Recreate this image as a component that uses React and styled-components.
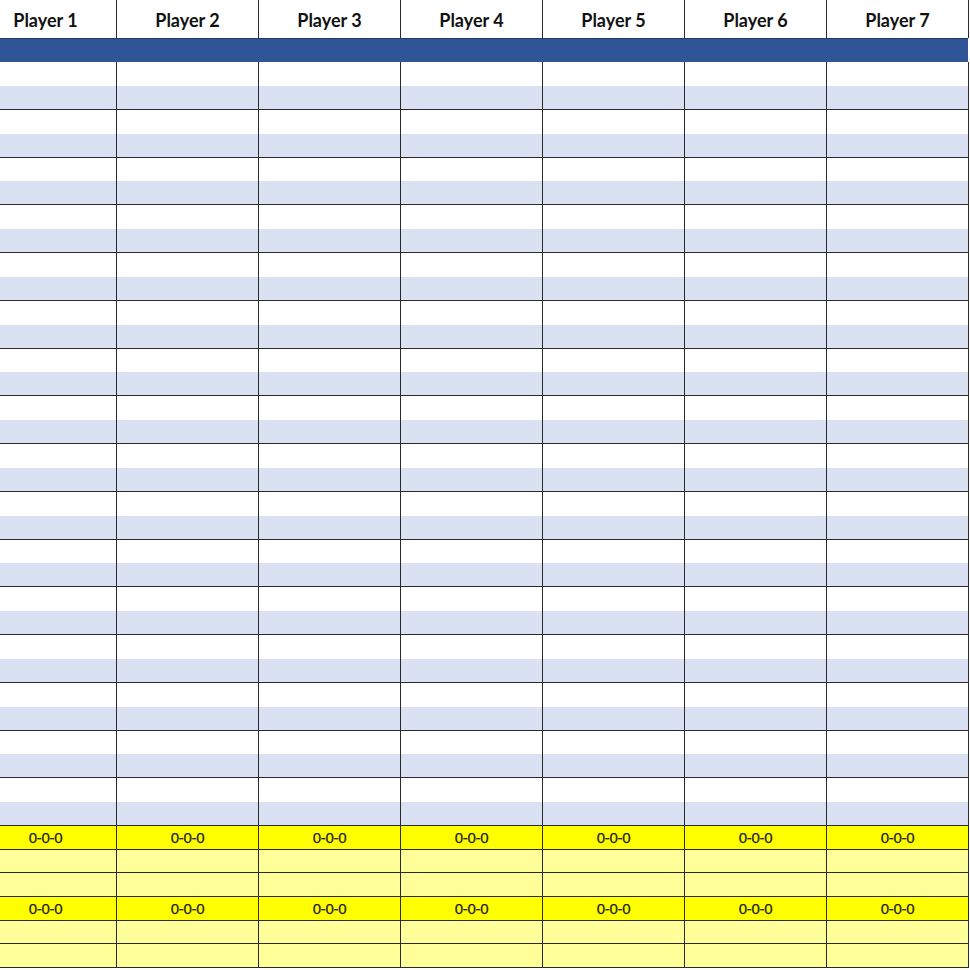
import styled, { createGlobalStyle } from "styled-components";

const GlobalStyle = createGlobalStyle`
  html, body {
    margin: 0;
    padding: 0;
    background: #ffffff;
    overflow: hidden;
  }
`;

const players = [1, 2, 3, 4, 5, 6, 7];

const Sheet = styled.div`
  margin-left: -26px;
  width: 995px;
`;

const Row = styled.div`
  display: grid;
  grid-template-columns: repeat(7, 142px);
  border-right: 1px solid #2a2a2a;
  box-sizing: border-box;
  height: ${(props) => props.h}px;
  background: ${(props) => props.bg || "transparent"};
  border-bottom: ${(props) => (props.line ? "1px solid #2a2a2a" : "none")};
`;

const Cell = styled.div`
  border-left: 1px solid #2a2a2a;
  display: flex;
  align-items: center;
  justify-content: center;
  overflow: hidden;
`;

const HeaderCell = styled(Cell)`
  font-family: Lato, "Open Sans", sans-serif;
  font-weight: 700;
  font-size: 18px;
  color: #111;
  padding-top: 1px;
`;

const ScoreCell = styled(Cell)`
  font-family: "Liberation Sans", Arial, sans-serif;
  font-size: 15px;
  letter-spacing: -0.3px;
  color: #222;
  -webkit-text-stroke: 0.25px #222;
`;

const Band = styled.div`
  height: 24px;
  background: #2f5597;
  border-top: 1px solid #1f3a6b;
  box-sizing: border-box;
  width: 994px;
`;

const groups = Array.from({ length: 16 }, (_, i) => i);
const yellowRows = [true, false, false, true, false, false];

const App = () => {
  return (
    <Sheet>
      <GlobalStyle />
      <Row h={38}>
        {players.map((p) => (
          <HeaderCell key={p}>Player {p}</HeaderCell>
        ))}
      </Row>
      <Band />
      {groups.map((g) => (
        <div key={g}>
          <Row h={23.875} bg="#ffffff">
            {players.map((p) => (
              <Cell key={p} />
            ))}
          </Row>
          <Row h={23.875} bg="#d9e1f2" line>
            {players.map((p) => (
              <Cell key={p} />
            ))}
          </Row>
        </div>
      ))}
      {yellowRows.map((score, i) => (
        <Row key={i} h={23.667} bg={score ? "#ffff00" : "#ffff99"} line>
          {players.map((p) =>
            score ? <ScoreCell key={p}>0-0-0</ScoreCell> : <Cell key={p} />
          )}
        </Row>
      ))}
    </Sheet>
  );
};

export default App;
